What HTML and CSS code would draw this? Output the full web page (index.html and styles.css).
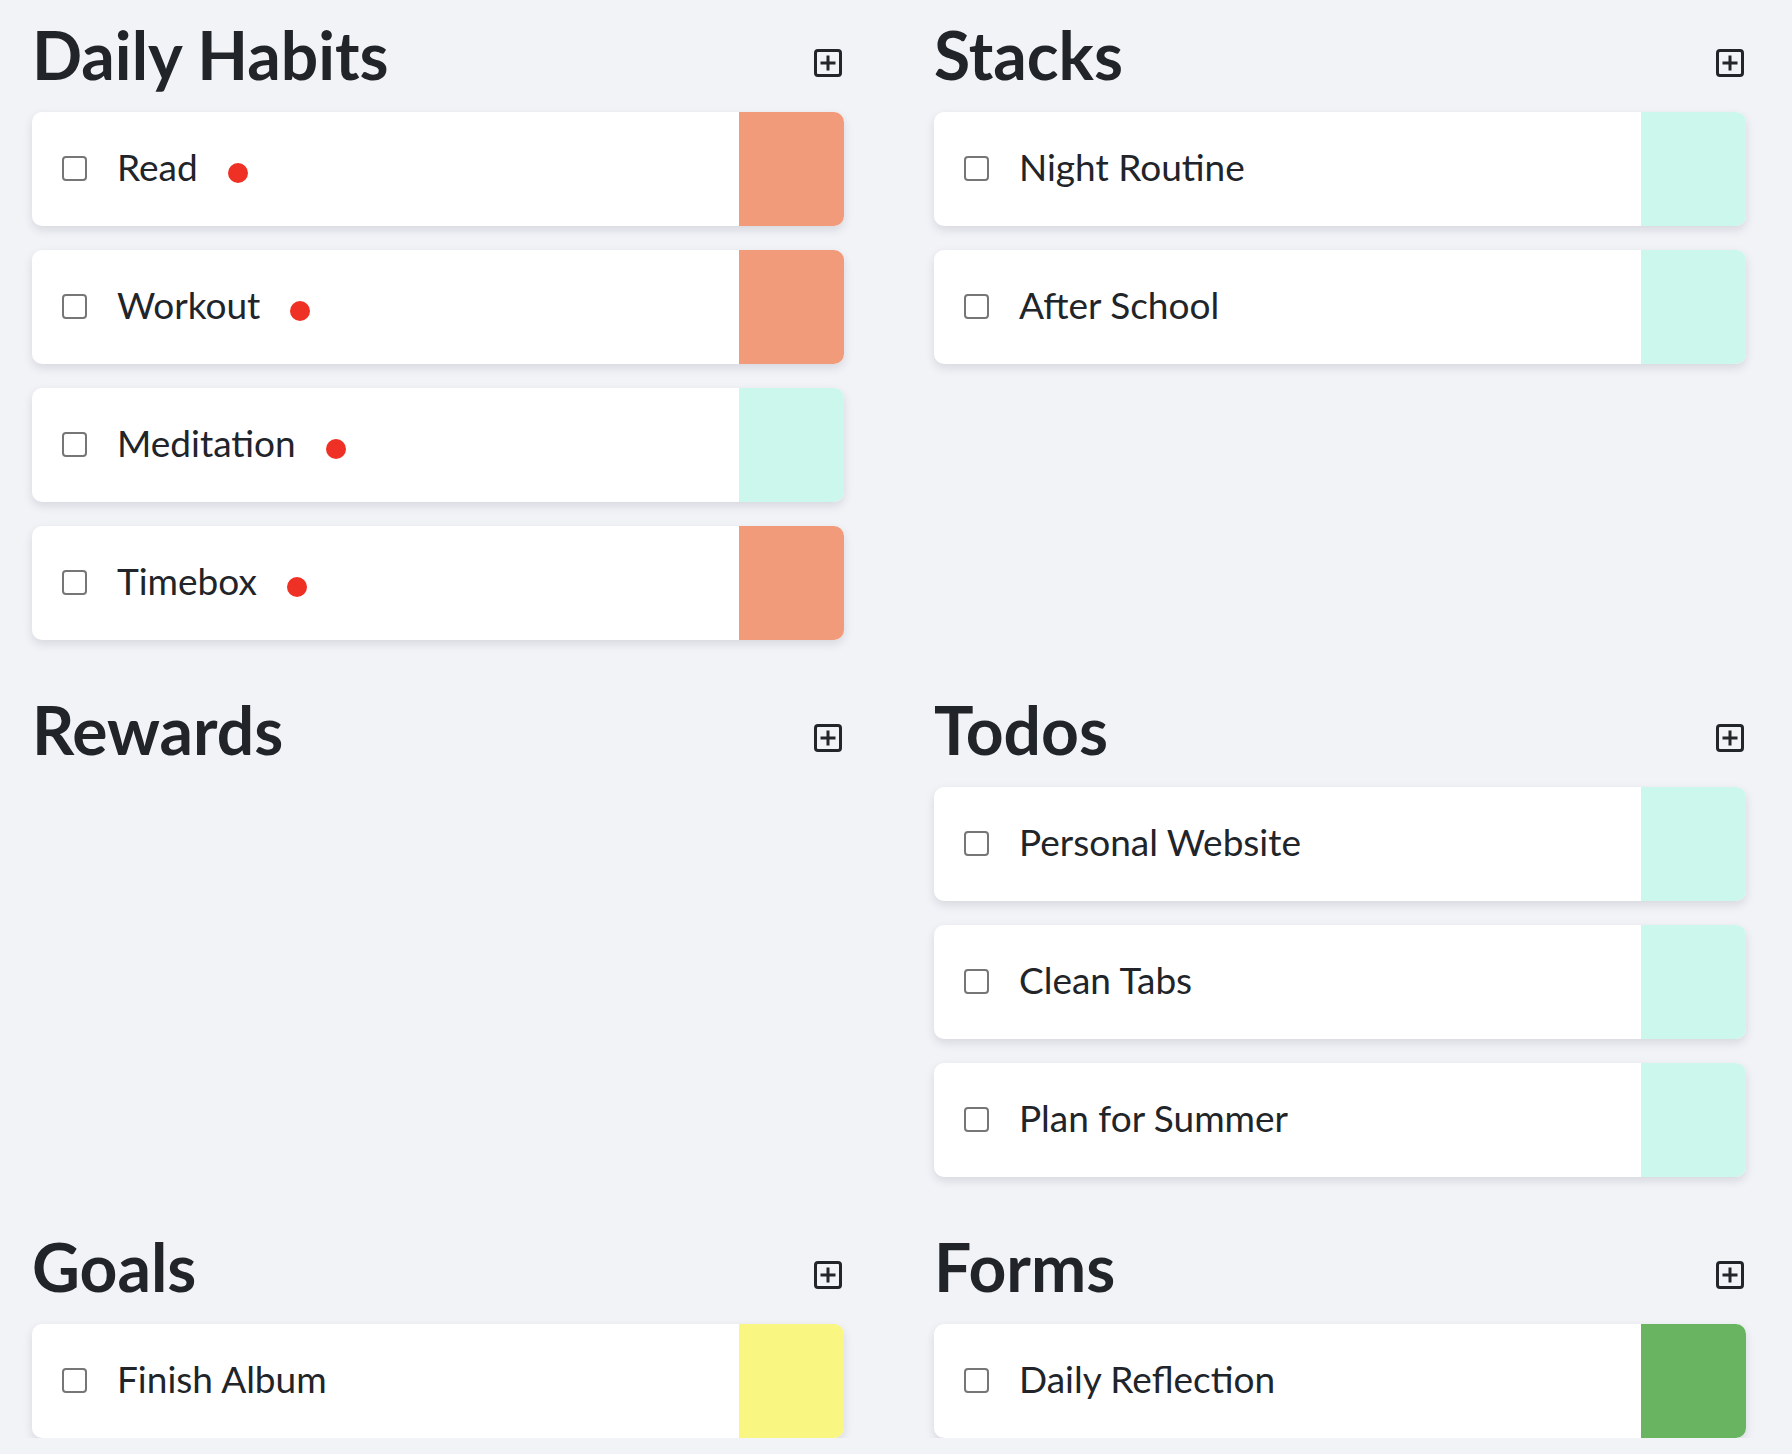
FILE: index.html
```html
<!DOCTYPE html>
<html lang="en">
<head>
<meta charset="utf-8">
<title>Board</title>
<link rel="stylesheet" href="styles.css">
</head>
<body>
<main class="board">
  <section class="section">
    <header class="section-head">
      <h2 class="section-title">Daily Habits</h2>
      <svg class="add-icon" viewBox="0 0 28 28" aria-hidden="true"><rect x="1.5" y="1.5" width="25" height="25" rx="2.5"/><path d="M6.5 14h15M14 6.5v15"/></svg>
    </header>
    <div class="cards">
      <div class="card"><div class="card-body"><span class="check"></span><span class="label">Read</span><span class="dot"></span></div><div class="strip orange"></div></div>
      <div class="card"><div class="card-body"><span class="check"></span><span class="label">Workout</span><span class="dot"></span></div><div class="strip orange"></div></div>
      <div class="card"><div class="card-body"><span class="check"></span><span class="label">Meditation</span><span class="dot"></span></div><div class="strip mint"></div></div>
      <div class="card"><div class="card-body"><span class="check"></span><span class="label">Timebox</span><span class="dot"></span></div><div class="strip orange"></div></div>
    </div>
  </section>
  <section class="section">
    <header class="section-head">
      <h2 class="section-title">Stacks</h2>
      <svg class="add-icon" viewBox="0 0 28 28" aria-hidden="true"><rect x="1.5" y="1.5" width="25" height="25" rx="2.5"/><path d="M6.5 14h15M14 6.5v15"/></svg>
    </header>
    <div class="cards">
      <div class="card"><div class="card-body"><span class="check"></span><span class="label">Night Routine</span></div><div class="strip mint"></div></div>
      <div class="card"><div class="card-body"><span class="check"></span><span class="label">After School</span></div><div class="strip mint"></div></div>
    </div>
  </section>
  <section class="section">
    <header class="section-head">
      <h2 class="section-title">Rewards</h2>
      <svg class="add-icon" viewBox="0 0 28 28" aria-hidden="true"><rect x="1.5" y="1.5" width="25" height="25" rx="2.5"/><path d="M6.5 14h15M14 6.5v15"/></svg>
    </header>
    <div class="cards"></div>
  </section>
  <section class="section">
    <header class="section-head">
      <h2 class="section-title">Todos</h2>
      <svg class="add-icon" viewBox="0 0 28 28" aria-hidden="true"><rect x="1.5" y="1.5" width="25" height="25" rx="2.5"/><path d="M6.5 14h15M14 6.5v15"/></svg>
    </header>
    <div class="cards">
      <div class="card"><div class="card-body"><span class="check"></span><span class="label">Personal Website</span></div><div class="strip mint"></div></div>
      <div class="card"><div class="card-body"><span class="check"></span><span class="label">Clean Tabs</span></div><div class="strip mint"></div></div>
      <div class="card"><div class="card-body"><span class="check"></span><span class="label">Plan for Summer</span></div><div class="strip mint"></div></div>
    </div>
  </section>
  <section class="section">
    <header class="section-head">
      <h2 class="section-title">Goals</h2>
      <svg class="add-icon" viewBox="0 0 28 28" aria-hidden="true"><rect x="1.5" y="1.5" width="25" height="25" rx="2.5"/><path d="M6.5 14h15M14 6.5v15"/></svg>
    </header>
    <div class="cards">
      <div class="card"><div class="card-body"><span class="check"></span><span class="label">Finish Album</span></div><div class="strip yellow"></div></div>
    </div>
  </section>
  <section class="section">
    <header class="section-head">
      <h2 class="section-title">Forms</h2>
      <svg class="add-icon" viewBox="0 0 28 28" aria-hidden="true"><rect x="1.5" y="1.5" width="25" height="25" rx="2.5"/><path d="M6.5 14h15M14 6.5v15"/></svg>
    </header>
    <div class="cards">
      <div class="card"><div class="card-body"><span class="check"></span><span class="label">Daily Reflection</span></div><div class="strip green"></div></div>
    </div>
  </section>
</main>
</body>
</html>
```

FILE: styles.css
```css
html, body {
  margin: 0;
  padding: 0;
  background: #f2f3f7;
}

body {
  font-family: "Lato", "Noto Sans", sans-serif;
  color: #212429;
}

.board {
  display: grid;
  grid-template-columns: 812px 812px;
  column-gap: 90px;
  row-gap: 35px;
  padding: 0 32px;
  align-items: start;
}

.section-head {
  height: 112px;
  box-sizing: border-box;
  padding-top: 22px;
  display: flex;
  justify-content: space-between;
  align-items: flex-start;
}

.section-title {
  margin: 0;
  font-size: 66px;
  line-height: 1;
  font-weight: 700;
}

.add-icon {
  width: 28px;
  height: 28px;
  margin-top: 27px;
  margin-right: 2px;
  fill: none;
  stroke: #222529;
  stroke-width: 3;
}

.cards {
  display: flex;
  flex-direction: column;
  gap: 24px;
}

.card {
  display: flex;
  height: 114px;
  background: #ffffff;
  border-radius: 10px;
  overflow: hidden;
  box-shadow: 0 4px 10px rgba(30, 35, 60, 0.13);
}

.card-body {
  flex: 1;
  display: flex;
  align-items: center;
  padding-left: 30px;
}

.check {
  width: 25px;
  height: 25px;
  box-sizing: border-box;
  border: 2px solid #767676;
  border-radius: 4px;
  flex: none;
  margin-bottom: 1px;
}

.label {
  margin-left: 30px;
  margin-bottom: 5px;
  font-size: 37px;
  line-height: 1;
}

.dot {
  width: 20px;
  height: 20px;
  border-radius: 50%;
  background: #ee3124;
  margin-left: 30px;
  margin-top: 8px;
  flex: none;
}

.strip {
  width: 105px;
  flex: none;
}

.orange { background: #f29b7a; }
.mint { background: #ccf7ec; }
.yellow { background: #f9f681; }
.green { background: #69b460; }
```
